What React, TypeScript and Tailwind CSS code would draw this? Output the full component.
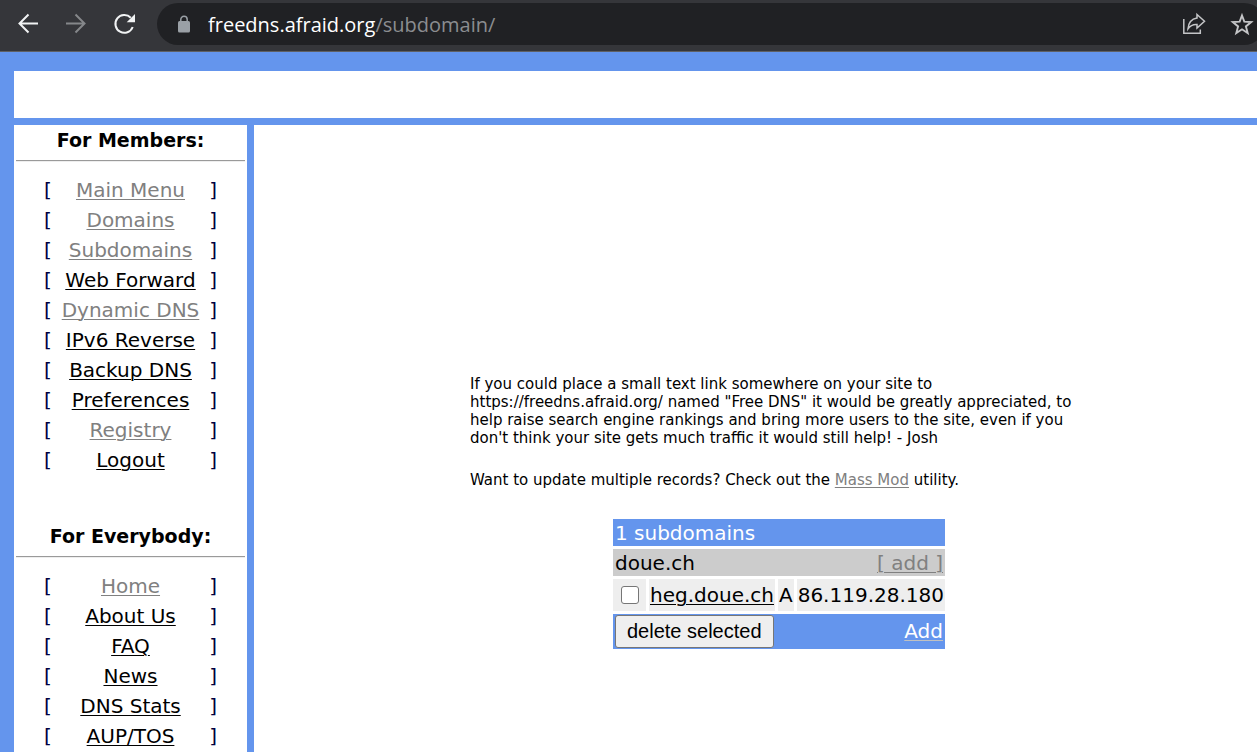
type NavItem = { label: string; visited?: boolean };

const memberLinks: NavItem[] = [
  { label: "Main Menu", visited: true },
  { label: "Domains", visited: true },
  { label: "Subdomains", visited: true },
  { label: "Web Forward" },
  { label: "Dynamic DNS", visited: true },
  { label: "IPv6 Reverse" },
  { label: "Backup DNS" },
  { label: "Preferences" },
  { label: "Registry", visited: true },
  { label: "Logout" },
];

const publicLinks: NavItem[] = [
  { label: "Home", visited: true },
  { label: "About Us" },
  { label: "FAQ" },
  { label: "News" },
  { label: "DNS Stats" },
  { label: "AUP/TOS" },
];

function NavSection({ title, items }: { title: string; items: NavItem[] }) {
  return (
    <nav aria-label={title} className="px-0.5">
      <h2 className="pt-0.5 text-center text-[19px] leading-[26px] font-bold">{title}</h2>
      <hr className="mt-[7px] mb-[13px] h-0.5 border-t border-b border-t-[#9a9a9a] border-b-[#eeeeee]" />
      <ul className="px-7">
        {items.map((item) => (
          <li key={item.label} className="flex h-[30px] items-center justify-between leading-[26px]">
            <span className="text-[#000040]">[</span>
            <a
              href="#"
              className={
                item.visited
                  ? "whitespace-nowrap text-[#808080] underline decoration-1 underline-offset-2"
                  : "whitespace-nowrap text-black underline decoration-1 underline-offset-2"
              }
            >
              {item.label}
            </a>
            <span className="text-[#000040]">]</span>
          </li>
        ))}
      </ul>
    </nav>
  );
}

function BrowserBar() {
  return (
    <header className="flex h-[52px] items-start border-b border-[#5f6063] bg-[#35363a] pt-[3px]">
      <div className="flex h-[42px] w-[157px] shrink-0 items-center gap-6 pl-4">
        <button aria-label="Back" className="text-[#f1f3f4]">
          <svg width="24" height="24" viewBox="0 0 24 24" fill="none" stroke="currentColor" strokeWidth="2">
            <path d="M22 11.500H3.500M12.500 2.500l-9 9 9 9" />
          </svg>
        </button>
        <button aria-label="Forward" className="text-[#85878a]">
          <svg width="24" height="24" viewBox="0 0 24 24" fill="none" stroke="currentColor" strokeWidth="2">
            <path d="M2 11.500h18.500M11.500 2.500l9 9-9 9" />
          </svg>
        </button>
        <button aria-label="Reload" className="text-[#f1f3f4]">
          <svg width="24" height="24" viewBox="0 0 24 24" fill="none">
            <path d="M20.700 15A8.900 8.900 0 1 1 18.800 5.800" stroke="currentColor" strokeWidth="2" />
            <path d="M23 2v8.300h-8.300z" fill="currentColor" />
          </svg>
        </button>
      </div>
      <div className="-mr-2 flex h-[42px] min-w-0 flex-1 items-center rounded-full bg-[#202124] pr-[11px] pl-5">
        <svg width="14" height="18" viewBox="0 0 14 18" className="shrink-0 text-[#9aa0a6]">
          <path d="M3.800 7V4.500a3.200 3.200 0 0 1 6.400 0v2.500" fill="none" stroke="currentColor" strokeWidth="1.500" />
          <rect x="1" y="6" width="12" height="11.500" rx="1.500" fill="currentColor" />
        </svg>
        <p className="ml-[17px] flex-1 truncate pt-0.5 font-['Open_Sans',sans-serif] text-[20px] leading-7 text-[#8b8d90]">
          <span className="text-white">freedns.afraid.org</span>/subdomain/
        </p>
        <div className="flex items-center gap-6 text-[#c4c5c7]">
          <button aria-label="Share">
            <svg width="24" height="24" viewBox="0 0 24 24" fill="none" stroke="currentColor" strokeWidth="1.500">
              <path d="M1.800 7v14.300h16.500v-3.800" />
              <path d="M15 2.500l7.500 6.800-7.500 6.800v-3.600c-4-.3-6.700 1-9 4.300.5-6 3.800-9.800 9-10.700z" />
            </svg>
          </button>
          <button aria-label="Bookmark this page">
            <svg width="24" height="24" viewBox="0 0 24 24" fill="none" stroke="currentColor" strokeWidth="1.900">
              <path d="M12 3.500l2.300 6.200 6.900.4-5.300 4.300 1.800 6.700L12 17.300l-5.700 3.800 1.800-6.700-5.300-4.300 6.900-.4z" />
            </svg>
          </button>
        </div>
      </div>
    </header>
  );
}

function SubdomainTable() {
  return (
    <form onSubmit={(e) => e.preventDefault()}>
      <table className="border-separate border-spacing-[3px] whitespace-nowrap text-[20px] leading-[23px]">
        <tbody>
          <tr>
            <th colSpan={4} className="bg-[#6495ed] px-0.5 pt-[3px] pb-px text-left font-normal text-white">
              1 subdomains
            </th>
          </tr>
          <tr>
            <td colSpan={4} className="bg-[#cccccc] px-0.5 pt-[3px] pb-px">
              <div className="flex justify-between">
                <span>doue.ch</span>
                <a href="#" className="text-[#808080] underline decoration-1 underline-offset-2">
                  [ add ]
                </a>
              </div>
            </td>
          </tr>
          <tr className="h-8">
            <td className="w-[33px] bg-[#eeeeee]">
              <input
                type="checkbox"
                aria-label="Select heg.doue.ch"
                className="mx-auto block size-[18px] appearance-none rounded-[3px] border border-[#767676] bg-white"
              />
            </td>
            <td className="bg-[#eeeeee] px-px">
              <a href="#" className="underline decoration-1 underline-offset-2">
                heg.doue.ch
              </a>
            </td>
            <td className="bg-[#eeeeee] px-px">A</td>
            <td className="bg-[#eeeeee] px-px">86.119.28.180</td>
          </tr>
          <tr>
            <td colSpan={4} className="bg-[#6495ed] px-0.5 py-px">
              <div className="flex items-center justify-between">
                <button
                  type="submit"
                  className="h-[33px] rounded-[3px] border border-[#767676] bg-[#efefef] px-[11px] font-['Liberation_Sans',Arial,sans-serif] text-[20px] text-black"
                >
                  delete selected
                </button>
                <a href="#" className="text-white underline decoration-[#c0c0c0] decoration-1 underline-offset-2">
                  Add
                </a>
              </div>
            </td>
          </tr>
        </tbody>
      </table>
    </form>
  );
}

export default function App() {
  return (
    <div className="flex h-screen flex-col overflow-hidden bg-[#6495ed] font-['DejaVu_Sans',Verdana,sans-serif] text-[20px] text-black">
      <BrowserBar />
      <div className="flex min-h-0 flex-1 flex-col gap-[7px] pt-[19px] pl-3.5">
        <div className="h-[47px] shrink-0 bg-white" />
        <div className="flex min-h-0 flex-1 gap-[7px]">
          <aside className="flex w-[233px] shrink-0 flex-col gap-[46px] overflow-hidden bg-white">
            <NavSection title="For Members:" items={memberLinks} />
            <NavSection title="For Everybody:" items={publicLinks} />
          </aside>
          <main className="flex min-w-0 flex-1 flex-col items-center bg-white pt-[250px] pl-[47px]">
            <div className="w-full max-w-[618px] text-[15px] leading-[18px]">
              <p>
                If you could place a small text link somewhere on your site to https://freedns.afraid.org/ named
                "Free DNS" it would be greatly appreciated, to help raise search engine rankings and bring more
                users to the site, even if you don't think your site gets much traffic it would still help! - Josh
              </p>
              <p className="mt-6 mb-[27px]">
                Want to update multiple records? Check out the{" "}
                <a href="#" className="text-[#808080] underline decoration-1 underline-offset-2">
                  Mass Mod
                </a>{" "}
                utility.
              </p>
            </div>
            <SubdomainTable />
          </main>
        </div>
      </div>
    </div>
  );
}
